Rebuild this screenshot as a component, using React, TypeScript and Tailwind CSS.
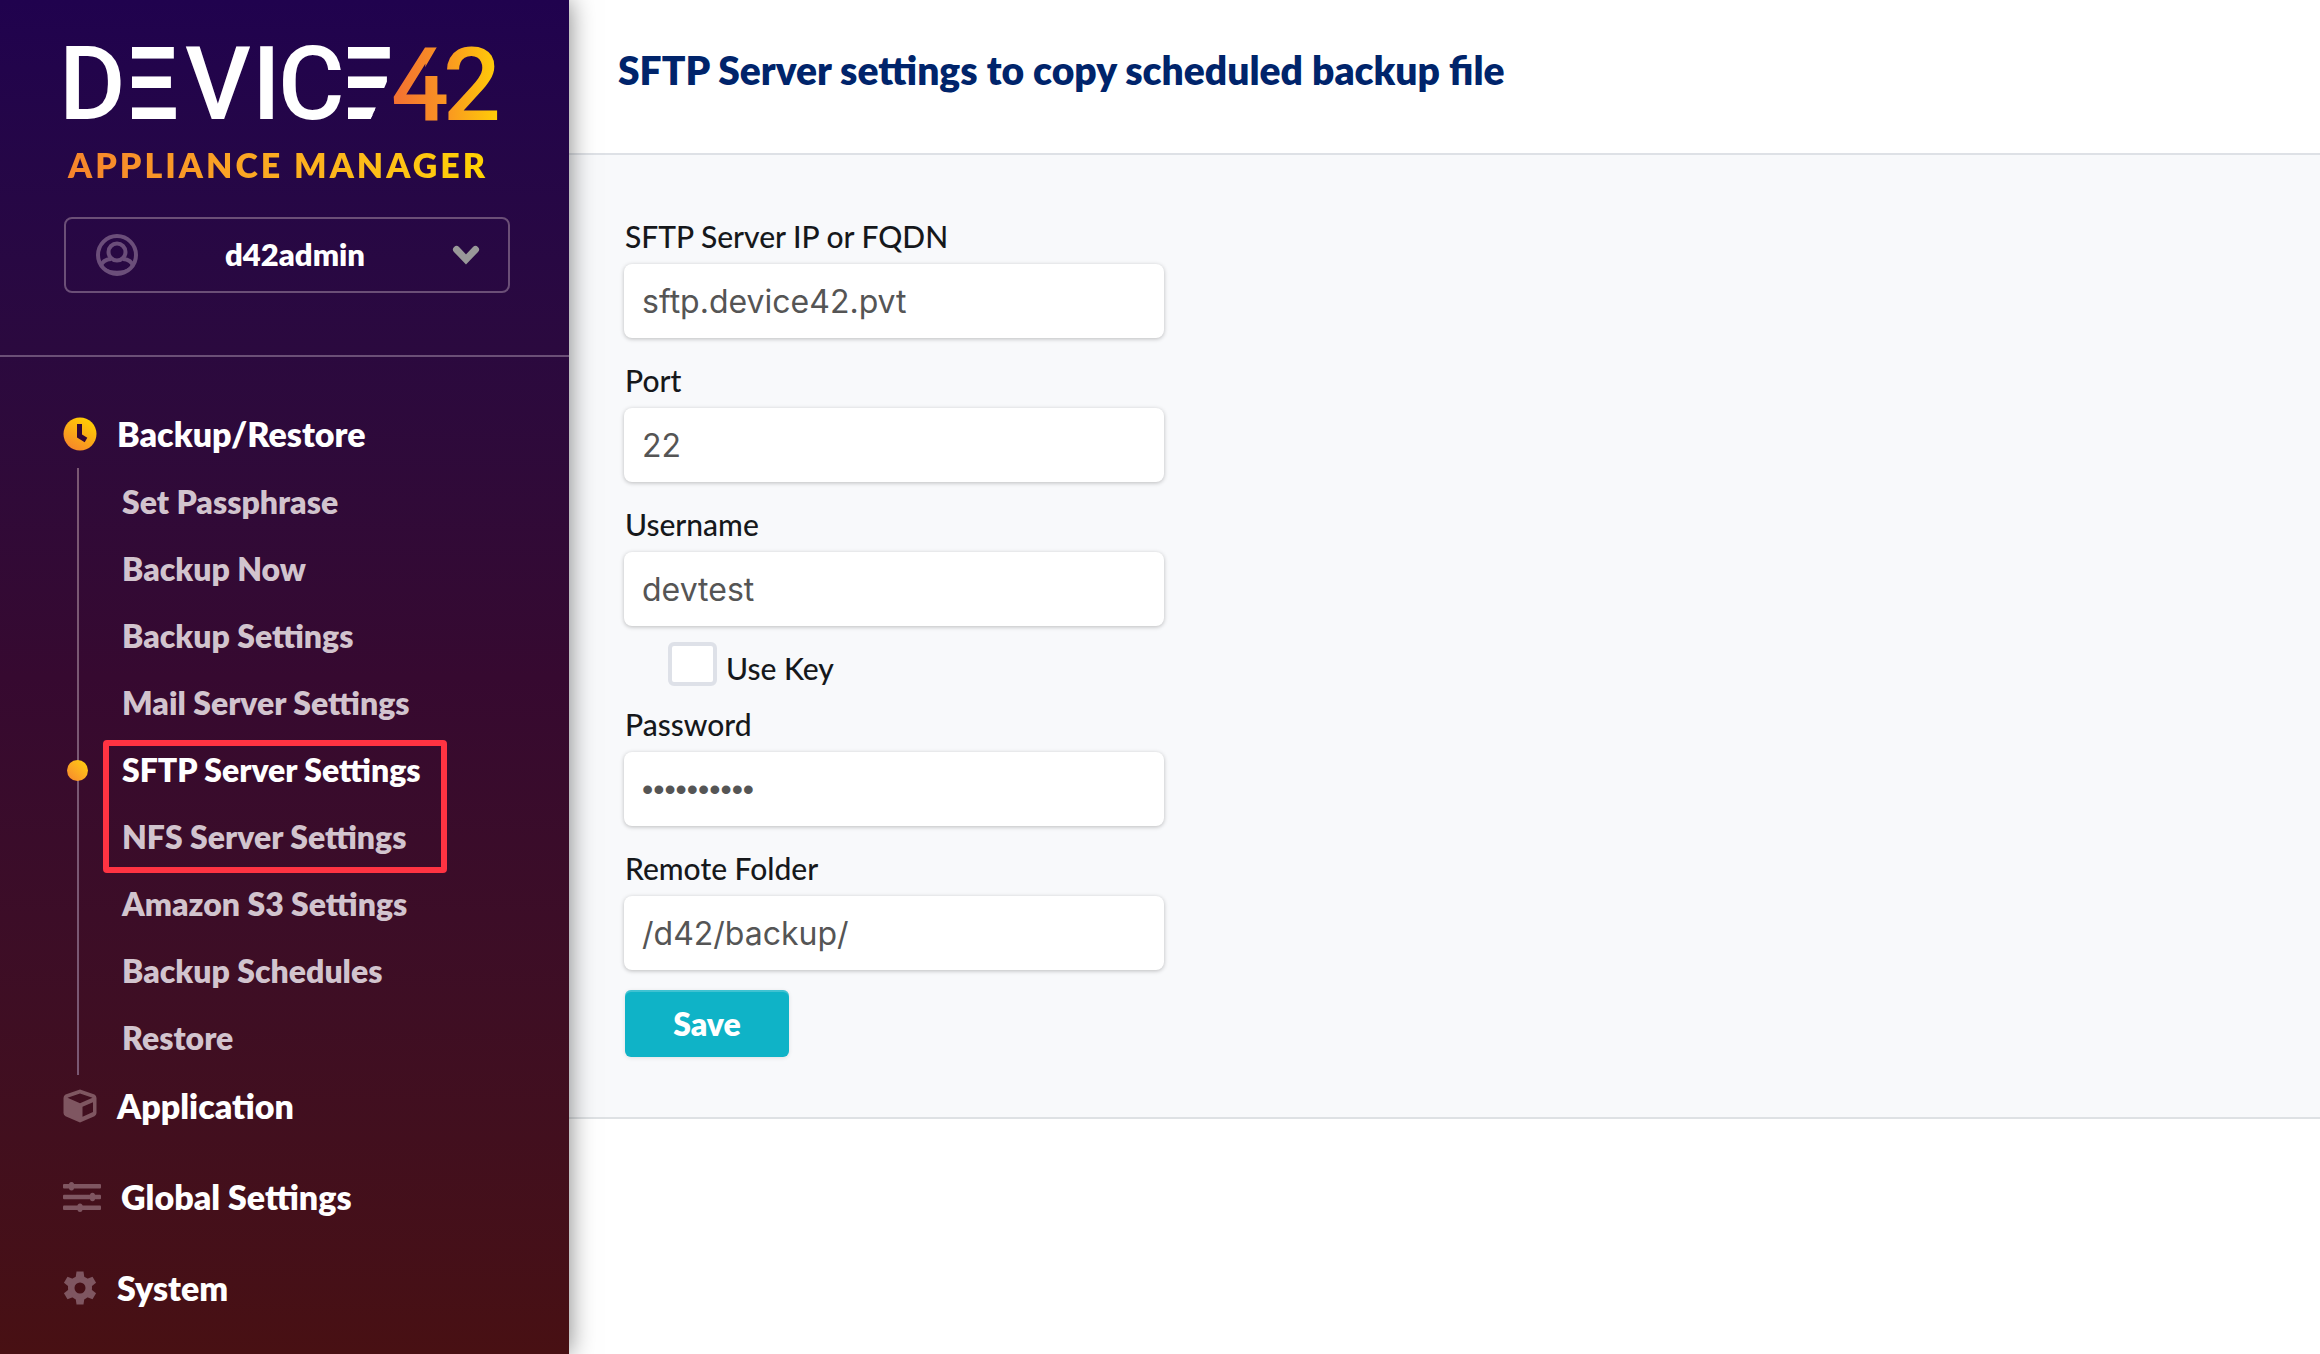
import React from 'react';

const backupLinks = [
  'Set Passphrase',
  'Backup Now',
  'Backup Settings',
  'Mail Server Settings',
  'SFTP Server Settings',
  'NFS Server Settings',
  'Amazon S3 Settings',
  'Backup Schedules',
  'Restore',
];

function Logo() {
  return (
    <svg viewBox="66 44 432 80" className="block h-20 w-[432px]" role="img" aria-label="DEVICE42">
      <defs>
        <linearGradient id="logo-gold" gradientUnits="userSpaceOnUse" x1="394" y1="0" x2="497" y2="0">
          <stop offset="0" stopColor="#f37032" />
          <stop offset="0.5" stopColor="#f99522" />
          <stop offset="1" stopColor="#ffcd07" />
        </linearGradient>
        <clipPath id="logo-e-first">
          <rect x="132" y="40" width="45" height="90" />
        </clipPath>
        <clipPath id="logo-e-last">
          <polygon points="348,40 405,40 366,130 348,130" />
        </clipPath>
        <clipPath id="logo-four">
          <polygon points="380,40 441,40 420,76 460,76 460,130 380,130" />
        </clipPath>
      </defs>
      <g fill="#fff" fontFamily="Roboto, sans-serif" fontWeight="500" fontSize="102">
        <text x="59" y="119">D</text>
        <text
          x="112" y="117" clipPath="url(#logo-e-first)"
          fontFamily="'Liberation Sans', sans-serif" fontWeight="400" fontSize="99"
          stroke="#fff" strokeWidth="4"
        >E</text>
        <text x="185" y="119">V</text>
        <text x="252" y="119">I</text>
        <text x="278" y="119">C</text>
        <text
          x="328" y="117" clipPath="url(#logo-e-last)"
          fontFamily="'Liberation Sans', sans-serif" fontWeight="400" fontSize="99"
          stroke="#fff" strokeWidth="4"
        >E</text>
        <text x="391" y="120" fill="url(#logo-gold)" clipPath="url(#logo-four)">4</text>
        <text x="443" y="120" fill="url(#logo-gold)">2</text>
      </g>
    </svg>
  );
}

function UserIcon() {
  return (
    <svg viewBox="0 0 42 42" className="size-[42px] shrink-0" fill="none" stroke="#6b4e7a" strokeWidth="4" aria-hidden="true">
      <circle cx="21" cy="21" r="19" />
      <circle cx="21" cy="18" r="8.500" />
      <path d="M5 32c1-4 4-6.500 10-7M37 32c-1-4-4-6.500-10-7" />
      <path d="M8 34c7 5 19 5 26 0" strokeWidth="2" />
    </svg>
  );
}

function ClockIcon() {
  return (
    <svg viewBox="0 0 34 34" className="size-[34px] shrink-0" aria-hidden="true">
      <defs>
        <linearGradient id="clock-gold" x1="0.2" y1="1" x2="0.8" y2="0">
          <stop offset="0" stopColor="#f6842c" />
          <stop offset="1" stopColor="#ffd200" />
        </linearGradient>
      </defs>
      <circle cx="17" cy="17" r="16.500" fill="url(#clock-gold)" />
      <path d="M16.500 7v12l6.500 4" fill="none" stroke="#2f0637" strokeWidth="5" />
    </svg>
  );
}

function CubeIcon() {
  return (
    <svg viewBox="0 0 34 34" className="size-[34px] shrink-0" aria-hidden="true">
      <path
        fillRule="evenodd"
        fill="#7f5661"
        d="M17 0.500 31.500 5.500Q33.500 6.500 33.500 9v15q0 2-2 3.200L17 33.500 2.500 27.200Q0.500 26 0.500 24V9q0-2.500 2-3.500ZM17 4.500 4.500 8.800 17 14.200 29.500 8.800ZM19.500 17.800v10l10.500-4.700V13.300Z"
      />
    </svg>
  );
}

function SlidersIcon() {
  return (
    <svg viewBox="0 0 38 30" className="h-[30px] w-[38px] shrink-0" fill="#7f5661" aria-hidden="true">
      <rect x="0" y="2" width="38" height="4.500" rx="1" />
      <rect x="0" y="12.700" width="38" height="4.500" rx="1" />
      <rect x="0" y="23.500" width="38" height="4.500" rx="1" />
      <ellipse cx="8.500" cy="4.200" rx="2.800" ry="4.200" />
      <ellipse cx="29.500" cy="15" rx="2.800" ry="4.200" />
      <ellipse cx="17" cy="25.700" rx="2.800" ry="4.200" />
    </svg>
  );
}

function GearIcon() {
  return (
    <svg viewBox="0 0 34 34" className="size-[34px] shrink-0" aria-hidden="true">
      <g fill="#7f5661">
        <path
          fillRule="evenodd"
          d="M17 5a12 12 0 1 0 0 24 12 12 0 0 0 0-24Zm0 6.500a5.500 5.500 0 1 1 0 11 5.500 5.500 0 0 1 0-11Z"
        />
        {[0, 60, 120, 180, 240, 300].map((a) => (
          <path key={a} transform={`rotate(${a} 17 17)`} d="M13.500 0.500h7l1 7h-9Z" />
        ))}
      </g>
    </svg>
  );
}

function SectionLink({ icon, label }: { icon: React.ReactNode; label: string }) {
  return (
    <a href="#" className="flex h-10 items-center gap-5 text-[34px] leading-10 font-extrabold text-white">
      {icon}
      {label}
    </a>
  );
}

function Sidebar() {
  return (
    <aside className="z-10 w-[569px] shrink-0 bg-linear-to-b from-[#20024e] via-[#360930] to-[#481013] shadow-[0_0_24px_rgba(0,0,0,0.5)]">
      <div className="border-b-2 border-[#6b4f77] px-16 pt-11 pb-[62px]">
        <div className="pl-0.5">
          <Logo />
          <div className="mt-[21px] w-fit bg-linear-to-r from-[#f6842c] to-[#ffd200] bg-clip-text pl-0.5 text-[34px] leading-10 font-extrabold tracking-[3px] whitespace-nowrap text-transparent">
            APPLIANCE MANAGER
          </div>
        </div>
        <button
          type="button"
          className="mt-8 flex h-[76px] w-[446px] items-center justify-between rounded-lg border-2 border-[#6b4f77] pr-7 pl-[30px] text-[31px] font-extrabold text-white"
        >
          <UserIcon />
          <span className="pb-0.5">d42admin</span>
          <svg viewBox="0 0 28 20" className="h-5 w-7" fill="none" stroke="#999" strokeWidth="7" strokeLinecap="round" aria-hidden="true">
            <path d="M4.500 4.500 14 14.500l9.500-10" />
          </svg>
        </button>
      </div>
      <nav className="pt-[57px] pb-8 pl-[63px]">
        <SectionLink icon={<ClockIcon />} label="Backup/Restore" />
        <ul className="mt-3.5 ml-3.5 border-l-2 border-[#7a5873] pb-1">
          {backupLinks.map((label) => {
            const current = label === 'SFTP Server Settings';
            return (
              <li key={label} className="relative flex h-[67px] items-center pl-[43px]">
                {current && (
                  <>
                    <span className="absolute top-6 -left-3 size-[21px] rounded-full bg-linear-to-tr from-[#f6842c] to-[#ffd200]" />
                    <span className="pointer-events-none absolute top-1 left-6 h-[133px] w-[344px] rounded border-6 border-[#ff3342]" />
                  </>
                )}
                <a
                  href="#"
                  aria-current={current ? 'page' : undefined}
                  className={current ? 'text-[32px] font-extrabold text-white' : 'text-[32px] font-extrabold text-[#d2c4ce]'}
                >
                  {label}
                </a>
              </li>
            );
          })}
        </ul>
        <div className="mt-[11px] flex flex-col gap-[51px]">
          <SectionLink icon={<CubeIcon />} label="Application" />
          <SectionLink icon={<SlidersIcon />} label="Global Settings" />
          <SectionLink icon={<GearIcon />} label="System" />
        </div>
      </nav>
    </aside>
  );
}

function Field({ id, label, value, type = 'text' }: { id: string; label: string; value: string; type?: string }) {
  return (
    <div>
      <label htmlFor={id} className="block text-[30px] leading-9 font-medium text-[#16181b]">
        {label}
      </label>
      <input
        id={id}
        type={type}
        defaultValue={value}
        className={
          type === 'password'
            ? "-ml-px mt-2.5 block h-[74px] w-[540px] rounded-lg bg-white px-[18px] font-['Liberation_Sans',sans-serif] text-[32px] text-[#555] shadow-[0_1px_4px_rgba(0,0,0,0.25)] outline-none"
            : "-ml-px mt-2.5 block h-[74px] w-[540px] rounded-lg bg-white px-[18px] font-['Inter',sans-serif] text-[32px] text-[#555] shadow-[0_1px_4px_rgba(0,0,0,0.25)] outline-none"
        }
      />
    </div>
  );
}

export default function App() {
  return (
    <div className="flex min-h-screen bg-white font-['Lato',sans-serif]">
      <Sidebar />
      <main className="min-w-0 flex-1">
        <header className="border-b-2 border-[#dee1e6] px-[49px] pt-[46px] pb-[59px]">
          <h1 className="text-[39px] leading-[48px] font-extrabold text-[#00246b]">
            SFTP Server settings to copy scheduled backup file
          </h1>
        </header>
        <form className="border-b-2 border-[#dee1e4] bg-[#f8f9fb] px-14 pt-[63px] pb-[60px]" onSubmit={(e) => e.preventDefault()}>
          <div className="flex flex-col gap-6">
            <Field id="host" label="SFTP Server IP or FQDN" value="sftp.device42.pvt" />
            <Field id="port" label="Port" value="22" />
            <Field id="username" label="Username" value="devtest" />
          </div>
          <div className="mt-4 mb-5 flex h-11 items-start gap-[9px] pl-[43px]">
            <input id="use-key" type="checkbox" className="h-11 w-[49px] appearance-none rounded-md border-4 border-[#dee1e8] bg-white" />
            <label htmlFor="use-key" className="mt-2 text-[30px] leading-9 font-medium text-[#16181b]">
              Use Key
            </label>
          </div>
          <div className="flex flex-col gap-6">
            <Field id="password" label="Password" value="backup4242" type="password" />
            <Field id="folder" label="Remote Folder" value="/d42/backup/" />
          </div>
          <button
            type="submit"
            className="mt-5 block h-[67px] w-[164px] rounded-md bg-[#0fb3c7] text-[32px] font-extrabold text-white shadow-[inset_0_2px_0_rgba(255,255,255,0.2),0_1px_4px_rgba(0,0,0,0.1)]"
          >
            Save
          </button>
        </form>
      </main>
    </div>
  );
}
